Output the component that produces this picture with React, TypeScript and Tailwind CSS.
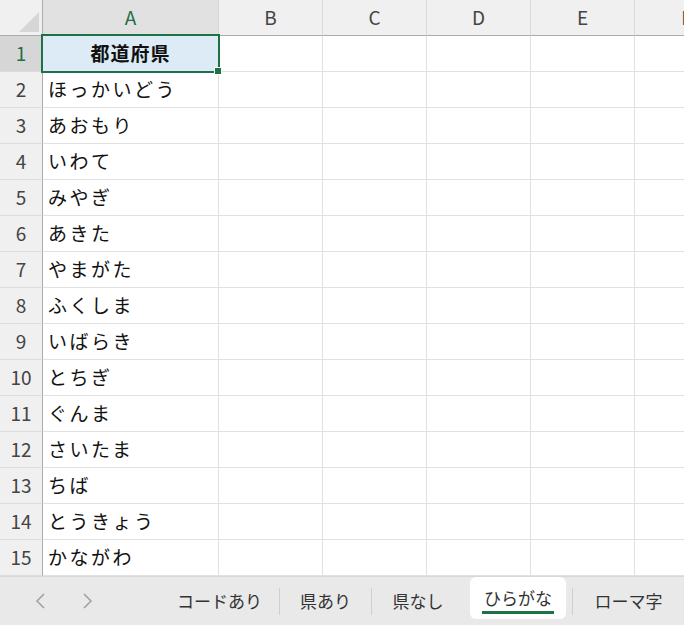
import React from "react";

const COLS = [
  { key: "A", w: "w-[176px]" },
  { key: "B", w: "w-[104px]" },
  { key: "C", w: "w-[104px]" },
  { key: "D", w: "w-[104px]" },
  { key: "E", w: "w-[104px]" },
  { key: "F", w: "w-[104px]" },
];

const ROWS = [
  "都道府県",
  "ほっかいどう",
  "あおもり",
  "いわて",
  "みやぎ",
  "あきた",
  "やまがた",
  "ふくしま",
  "いばらき",
  "とちぎ",
  "ぐんま",
  "さいたま",
  "ちば",
  "とうきょう",
  "かながわ",
];

const font = { fontFamily: '"Noto Sans CJK JP", "Noto Sans", sans-serif' };

function HeaderRow() {
  return (
    <div className="flex h-[36px]">
      {/* corner */}
      <div className="relative w-[43px] shrink-0 bg-[#f0f0f0] border-r border-b border-[#acacac] overflow-hidden">
        <div className="absolute right-[3px] bottom-[3px] w-0 h-0 border-l-[20px] border-l-transparent border-b-[20px] border-b-[#d6d6d6]" />
      </div>
      {COLS.map((c) => (
        <div
          key={c.key}
          className={`${c.w} shrink-0 flex items-center justify-center border-b border-[#acacac] text-[19px] ${
            c.key === "A"
              ? "bg-[#e1e1e1] text-[#1e7145] border-r border-r-[#d4d4d4]"
              : "bg-[#f0f0f0] text-[#444] border-r border-r-[#dadada]"
          }`}
        >
          {c.key}
        </div>
      ))}
    </div>
  );
}

function Row({ n, text }: { n: number; text: string }) {
  const first = n === 1;
  return (
    <div className="flex h-[36px]">
      <div
        className={`w-[43px] shrink-0 flex items-center justify-center border-r border-r-[#acacac] border-b border-b-[#dcdcdc] text-[19px] ${
          first ? "bg-[#d6d6d6] text-[#1e7145]" : "bg-[#f0f0f0] text-[#444]"
        }`}
      >
        {n}
      </div>
      {COLS.map((c) => (
        <div
          key={c.key}
          className={`${c.w} shrink-0 border-r border-b border-[#e1e1e1] flex items-center text-[19px] text-[#111] whitespace-nowrap ${
            c.key === "A" && first
              ? "bg-[#dcebf6] justify-center font-bold tracking-[1px]"
              : "bg-white pl-[5px] tracking-[2.5px]"
          }`}
        >
          {c.key === "A" ? text : ""}
        </div>
      ))}
    </div>
  );
}

const TABS = [
  { label: "コードあり", w: "w-[119px]" },
  { label: "県あり", w: "w-[91px]" },
  { label: "県なし", w: "w-[92px]" },
];

function TabBar() {
  return (
    <div className="h-[49px] bg-[#e9e9e9] border-t border-[#d8d8d8] flex items-center text-[17px] text-[#333] whitespace-nowrap overflow-hidden">
      <div className="flex items-center gap-[34px] pl-[33px] w-[160px] shrink-0 text-[#a0a0a0]">
        <svg width="14" height="18" viewBox="0 0 14 18" fill="none" stroke="currentColor" strokeWidth="1.5">
          <path d="M11 2 L4 9 L11 16" />
        </svg>
        <svg width="14" height="18" viewBox="0 0 14 18" fill="none" stroke="currentColor" strokeWidth="1.5">
          <path d="M3 2 L10 9 L3 16" />
        </svg>
      </div>
      {TABS.map((t, i) => (
        <React.Fragment key={t.label}>
          {i > 0 && <div className="w-px h-[27px] bg-[#cfcfcf] shrink-0" />}
          <div className={`${t.w} shrink-0 h-full flex items-center justify-center`}>{t.label}</div>
        </React.Fragment>
      ))}
      <div className="w-[6px] shrink-0" />
      <div className="relative w-[96px] shrink-0 h-[42px] mt-[-6px] bg-white rounded-[6px] flex items-center justify-center">
        <span>ひらがな</span>
        <div className="absolute left-[12px] right-[12px] bottom-[5px] h-[3px] bg-[#1e7145]" />
      </div>
      <div className="w-[6px] shrink-0" />
      <div className="w-px h-[27px] bg-[#cfcfcf] shrink-0" />
      <div className="w-[111px] shrink-0 h-full flex items-center justify-center">ローマ字</div>
    </div>
  );
}

export default function App() {
  return (
    <div className="w-[684px] h-[625px] overflow-hidden bg-white flex flex-col" style={font}>
      <div className="relative h-[576px] shrink-0 overflow-hidden">
        <HeaderRow />
        {ROWS.map((t, i) => (
          <Row key={i} n={i + 1} text={t} />
        ))}
        {/* selection */}
        <div className="absolute left-[41px] top-[34px] w-[179px] h-[39px] border-2 border-[#1e7145] pointer-events-none" />
        <div className="absolute left-[215px] top-[68px] w-[6px] h-[6px] bg-[#1e7145] outline outline-1 outline-white" />
      </div>
      <TabBar />
    </div>
  );
}
